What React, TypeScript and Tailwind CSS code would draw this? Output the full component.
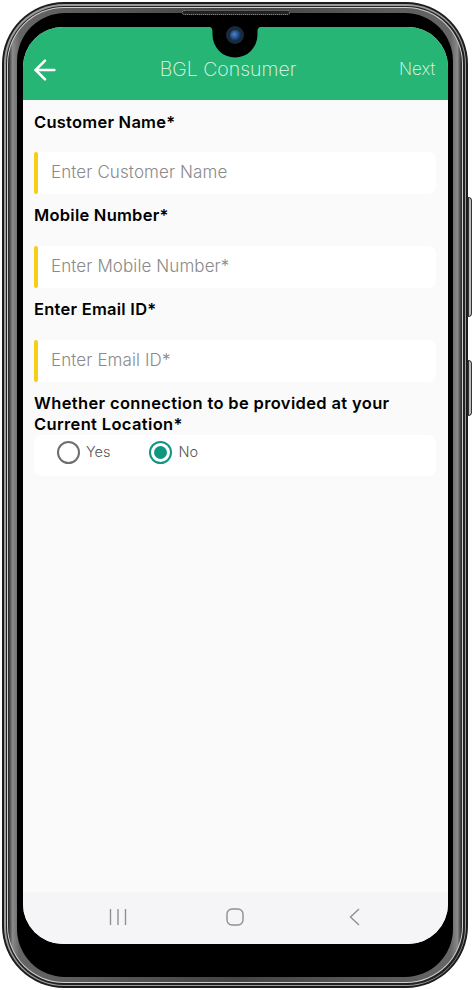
import { ArrowLeft } from 'lucide-react';

const font = "font-['Inter','Liberation_Sans',sans-serif]";

function Field({ label, placeholder, first }: { label: string; placeholder: string; first?: boolean }) {
  return (
    <div>
      <div className={`h-[52px] text-[16.5px] leading-[21px] font-semibold tracking-[0.25px] text-black ${first ? 'pt-[12px]' : 'pt-[11px]'}`}>{label}</div>
      <div className="flex h-[42px] rounded-lg bg-white">
        <div className="w-[3.5px] rounded-full bg-[#f6cd17]" />
        <div className={`flex items-center pl-[13.5px] text-[17px] font-light tracking-[0.1px] text-[#8a8a8a] ${first ? '' : 'pb-[1px]'}`}>{placeholder}</div>
      </div>
    </div>
  );
}

function Radio({ label, checked }: { label: string; checked?: boolean }) {
  return (
    <div className="flex items-center gap-[6px]">
      <div className={`flex h-[23px] w-[23px] items-center justify-center rounded-full border-2 ${checked ? 'border-[#0f9580]' : 'border-[#6e6e6e]'}`}>
        {checked && <div className="h-[13px] w-[13px] rounded-full bg-[#0f9580]" />}
      </div>
      <span className="text-[14.5px] font-light text-[#555]">{label}</span>
    </div>
  );
}

export default function App() {
  return (
    <div className={`relative h-[990px] w-[473px] overflow-hidden bg-white ${font}`}>
      {/* side keys */}
      <div className="absolute left-[468px] top-[197px] h-[120px] w-[3.5px] rounded-r-sm border border-[#333] bg-[#bbb]" />
      <div className="absolute left-[468px] top-[360px] h-[56px] w-[3.5px] rounded-r-sm border border-[#333] bg-[#bbb]" />

      {/* phone frame */}
      <div className="absolute left-[2px] top-[2px] h-[986px] w-[466px] rounded-[62px] bg-[#1c1c1c] p-[2px]">
        <div className="h-full w-full rounded-[60px] bg-[#9a9a9a] p-[1.5px]">
          <div className="h-full w-full rounded-[58px] bg-[#222] p-[1.5px]">
            <div className="h-full w-full rounded-[57px] bg-[#d0d0d0] p-[1px]">
              <div className="h-full w-full rounded-[56px] bg-[linear-gradient(90deg,#222_0%,#8a8a8a_1%,#666_2.5%,#444_50%,#666_97.5%,#8a8a8a_99%,#222_100%)] px-[9px] py-[5px]">
                <div className="h-full w-full rounded-[48px] bg-black pb-[33px] pl-[6px] pr-[5px] pt-[14px]">
                  {/* screen */}
                  <div className="relative flex h-full flex-col overflow-hidden rounded-[40px] bg-[#fafafa]">
                    <div className="flex h-[73px] shrink-0 items-center justify-between bg-[#26b574] pl-[6px] pr-[13px] pt-[13px] text-white">
                      <ArrowLeft size={32} strokeWidth={1.9} />
                      <span className="-ml-[4px] text-[19.5px] font-extralight text-[#e6f7ef]">BGL Consumer</span>
                      <span className="text-[17px] font-extralight text-[#e6f7ef]">Next</span>
                    </div>
                    <div className="flex-1 pl-[11px] pr-[12px]">
                      <Field first label="Customer Name*" placeholder="Enter Customer Name" />
                      <Field label="Mobile Number*" placeholder="Enter Mobile Number*" />
                      <Field label="Enter Email ID*" placeholder="Enter Email ID*" />
                      <div className="pt-[11px] text-[16.5px] leading-[21px] font-semibold tracking-[0.35px] text-black">
                        Whether connection to be provided at your Current Location*
                      </div>
                      <div className="flex h-[41px] items-center gap-[39px] rounded-lg bg-white pb-[7px] pl-[23px]">
                        <Radio label="Yes" />
                        <Radio label="No" checked />
                      </div>
                    </div>
                    <div className="flex h-[52px] shrink-0 items-center justify-between bg-[#f5f5f7] pb-[2px] pl-[86px] pr-[88px] text-[#909090]">
                      <svg width="18" height="18" viewBox="0 0 18 18" fill="none" stroke="currentColor" strokeWidth="1.4">
                        <path d="M1.5 1v16M9 1v16M16.5 1v16" />
                      </svg>
                      <svg className="-ml-[6px]" width="18" height="18" viewBox="0 0 18 18" fill="none" stroke="currentColor" strokeWidth="1.4">
                        <rect x="1" y="1" width="16" height="16" rx="5" />
                      </svg>
                      <svg width="11" height="18" viewBox="0 0 11 18" fill="none" stroke="currentColor" strokeWidth="1.4">
                        <path d="M10 1 1.5 9l8.5 8" />
                      </svg>
                    </div>
                    {/* notch */}
                    <svg className="absolute left-[186px] top-0" width="52" height="31" viewBox="0 0 52 31">
                      <path d="M0 0H52C48 0 48.5 4 48.5 8A22.5 22.5 0 0 1 3.5 8C3.5 4 4 0 0 0Z" fill="black" />
                    </svg>
                  </div>
                </div>
              </div>
            </div>
          </div>
        </div>
      </div>

      {/* camera */}
      <div className="absolute left-[226px] top-[26px] flex h-[18px] w-[18px] items-center justify-center rounded-full bg-[#1b2a3a]">
        <div className="h-[11px] w-[11px] rounded-full bg-[radial-gradient(circle_at_40%_40%,#4f86c6,#123a6b_60%,#050d1a)]" />
      </div>
      {/* speaker */}
      <div className="absolute left-[182px] top-[10px] h-[5px] w-[108px] rounded-full border border-dotted border-[#999] bg-[#222]" />
    </div>
  );
}
